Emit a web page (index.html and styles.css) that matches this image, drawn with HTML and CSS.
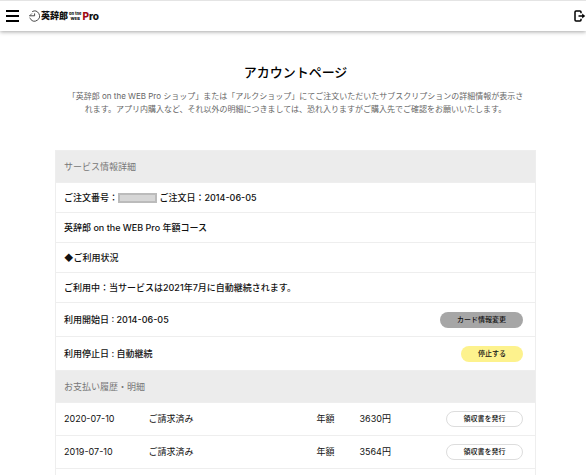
FILE: index.html
```html
<!DOCTYPE html>
<html lang="ja">
<head>
  <meta charset="UTF-8">
  <meta name="viewport" content="width=device-width, initial-scale=1.0">
  <title>アカウントページ</title>
  <link rel="stylesheet" href="styles.css">
</head>
<body>
  <header class="site-header">
    <button type="button" class="icon-button" aria-label="メニュー">
      <svg width="13" height="12" viewBox="0 0 13 12" fill="#000">
        <rect y="0" width="13" height="2"/>
        <rect y="5" width="13" height="2"/>
        <rect y="10" width="13" height="2"/>
      </svg>
    </button>
    <a class="logo" href="#">
      <svg width="11" height="12" viewBox="0 0 11 12" fill="none" stroke="#333" stroke-width="0.9">
        <path d="M3.2 1.6A5 5 0 1 1 1.6 9.2"/>
        <path d="M.3 5.8H5.6V3.4"/>
        <path d="M.6 5.8L3 3.4M.6 7.6l1.4 2" stroke-width="0.7"/>
      </svg>
      <span class="logo-name">英辞郎</span>
      <span class="logo-sub">on the<br>WEB</span>
      <span class="logo-pro"><span class="red">P</span>ro</span>
    </a>
    <a class="logout" href="#" aria-label="ログアウト">
      <svg width="12" height="12" viewBox="0 0 12 12" fill="none" stroke="#000" stroke-width="1.5">
        <path d="M7 3.2V2a1 1 0 0 0-1-1H2a1 1 0 0 0-1 1v8a1 1 0 0 0 1 1h4a1 1 0 0 0 1-1V8.8"/>
        <path d="M4.5 6H10"/>
        <path d="M8.2 3.6L11.2 6 8.2 8.4z" fill="#000" stroke="none"/>
      </svg>
    </a>
  </header>

  <main class="container">
    <h1>アカウントページ</h1>
    <p class="intro">「英辞郎 on the WEB Pro ショップ」または「アルクショップ」にてご注文いただいたサブスクリプションの詳細情報が表示さ<wbr>れます。アプリ内購入など、それ以外の明細につきましては、恐れ入りますがご購入先でご確認をお願いいたします。</p>

    <table class="account">
      <colgroup>
        <col class="col-date">
        <col class="col-status">
        <col class="col-plan">
        <col class="col-price">
        <col>
      </colgroup>
      <!-- サービス情報 -->
      <tbody class="service">
        <tr><th colspan="5">サービス情報詳細</th></tr>
        <tr><td colspan="5">ご注文番号：<span class="masked"></span> ご注文日：2014-06-05</td></tr>
        <tr><td colspan="5">英辞郎 on the WEB Pro 年額コース</td></tr>
        <tr><td colspan="5">◆ご利用状況</td></tr>
        <tr><td colspan="5">ご利用中：当サービスは2021年7月に自動継続されます。</td></tr>
        <tr class="tall">
          <td colspan="4">利用開始日 : 2014-06-05</td>
          <td class="action"><button type="button" class="btn btn-card">カード情報変更</button></td>
        </tr>
        <tr class="tall">
          <td colspan="4">利用停止日 : 自動継続</td>
          <td class="action"><button type="button" class="btn btn-stop">停止する</button></td>
        </tr>
      </tbody>
      <!-- お支払い履歴 -->
      <tbody class="history">
        <tr><th colspan="5">お支払い履歴・明細</th></tr>
        <tr class="tall">
          <td>2020-07-10</td>
          <td>ご請求済み</td>
          <td>年額</td>
          <td>3630円</td>
          <td class="action"><button type="button" class="btn btn-receipt">領収書を発行</button></td>
        </tr>
        <tr class="tall">
          <td>2019-07-10</td>
          <td>ご請求済み</td>
          <td>年額</td>
          <td>3564円</td>
          <td class="action"><button type="button" class="btn btn-receipt">領収書を発行</button></td>
        </tr>
      </tbody>
      <tfoot>
        <tr><td colspan="5"></td></tr>
      </tfoot>
    </table>
  </main>
</body>
</html>
```

FILE: styles.css
```css
* {
  box-sizing: border-box;
}

body {
  font-family: Inter, "Noto Sans CJK JP", sans-serif;
  font-size: 9px;
  margin: 0;
  color: #111;
  background: #fff;
}

/* Header */
.site-header {
  display: flex;
  align-items: center;
  gap: 10px;
  height: 31px;
  padding: 0 0 0 6px;
  border-top: 1px solid #e4e4e4;
  box-shadow: 0 1px 4px rgba(0, 0, 0, 0.35);
}

.icon-button {
  display: flex;
  padding: 0;
  border: none;
  background: none;
  cursor: pointer;
}

.logo {
  display: flex;
  align-items: center;
  gap: 1px;
  color: #111;
  text-decoration: none;
  font-weight: 800;
  line-height: 12px;
}

.logo-name {
  font-size: 9px;
}

.logo-sub {
  font-size: 4px;
  line-height: 5px;
  text-align: center;
}

.logo-pro {
  font-size: 10px;
}

.red {
  color: #a00a14;
}

.logout {
  display: flex;
  margin-left: auto;
}

/* Account */
.container {
  padding: 0 50px 0 55px;
}

h1 {
  margin: 31px 0 8px;
  font-size: 13px;
  font-weight: 500;
  line-height: 20px;
  text-align: center;
  color: #000;
}

.intro {
  margin: 0 0 34px;
  font-size: 8px;
  line-height: 13px;
  text-align: center;
  word-break: keep-all;
  color: #666;
}

.account {
  width: 100%;
  table-layout: fixed;
  border-collapse: collapse;
  border: 1px solid #eee;
}

.account th,
.account td {
  height: 30px;
  padding: 0 0 0 8px;
  border-top: 1px solid #eee;
  text-align: left;
  font-weight: 400;
  line-height: 12px;
}

.account th {
  height: 32px;
  background: #ececec;
  color: #777;
}

.service td {
  font-weight: 500;
}

.service .tall td {
  height: 34px;
}

.history .tall td {
  height: 33px;
}

.account .action {
  padding: 0 12px 0 0;
  text-align: right;
}

.account tfoot td {
  height: 12px;
}

.col-date {
  width: 85px;
}

.col-status {
  width: 168px;
}

.col-plan {
  width: 43px;
}

.col-price {
  width: 80px;
}

.masked {
  display: inline-block;
  width: 39px;
  height: 10px;
  border: 2px solid #bbb;
  background: #d6d6d6;
  vertical-align: text-bottom;
}

/* Buttons */
.btn {
  height: 16px;
  padding: 0;
  border: none;
  border-radius: 8px;
  font-family: inherit;
  font-size: 7px;
  font-weight: 500;
  line-height: 12px;
  color: #111;
  vertical-align: middle;
  cursor: pointer;
}

.btn-card {
  width: 83px;
  background: #a6a6a6;
}

.btn-stop {
  width: 62px;
  background: #fdf28d;
}

.btn-receipt {
  width: 77px;
  border: 1px solid #ddd;
  background: #fff;
}
```
